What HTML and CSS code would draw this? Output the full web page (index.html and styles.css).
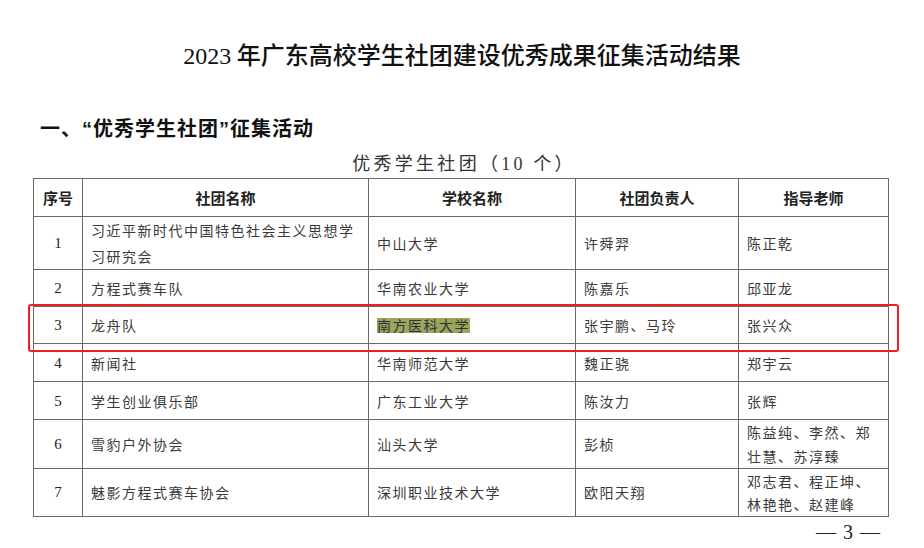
FILE: index.html
```html
<!DOCTYPE html>
<html lang="zh-CN">
<head>
<meta charset="utf-8">
<title>2023 年广东高校学生社团建设优秀成果征集活动结果</title>
<link rel="stylesheet" href="styles.css">
</head>
<body>
<div class="page">
  <h1 class="title"><span class="num">2023</span> 年广东高校学生社团建设优秀成果征集活动结果</h1>
  <h2 class="section">一、“优秀学生社团”征集活动</h2>
  <div class="caption">优秀学生社团（<span class="num">10</span> 个）</div>
  <table class="grid">
    <colgroup>
      <col class="c1"><col class="c2"><col class="c3"><col class="c4"><col class="c5">
    </colgroup>
    <thead>
      <tr class="h-head">
        <th>序号</th><th>社团名称</th><th>学校名称</th><th>社团负责人</th><th>指导老师</th>
      </tr>
    </thead>
    <tbody>
      <tr class="h-53 lh-26">
        <td class="idx">1</td><td>习近平新时代中国特色社会主义思想学习研究会</td><td>中山大学</td><td>许舜羿</td><td>陈正乾</td>
      </tr>
      <tr class="h-37">
        <td class="idx">2</td><td>方程式赛车队</td><td>华南农业大学</td><td>陈嘉乐</td><td>邱亚龙</td>
      </tr>
      <tr class="h-37">
        <td class="idx">3</td><td>龙舟队</td><td><span class="mark">南方医科大学</span></td><td>张宇鹏、马玲</td><td>张兴众</td>
      </tr>
      <tr class="h-38">
        <td class="idx">4</td><td>新闻社</td><td>华南师范大学</td><td>魏正骁</td><td>郑宇云</td>
      </tr>
      <tr class="h-38">
        <td class="idx">5</td><td>学生创业俱乐部</td><td>广东工业大学</td><td>陈汝力</td><td>张辉</td>
      </tr>
      <tr class="h-47">
        <td class="idx">6</td><td>雪豹户外协会</td><td>汕头大学</td><td>彭桢</td><td>陈益纯、李然、郑壮慧、苏淳臻</td>
      </tr>
      <tr class="h-48 lh-23">
        <td class="idx">7</td><td>魅影方程式赛车协会</td><td>深圳职业技术大学</td><td>欧阳天翔</td><td>邓志君、程正坤、林艳艳、赵建峰</td>
      </tr>
    </tbody>
  </table>
  <div class="pageno">— 3 —</div>
  <div class="redbox"></div>
</div>
</body>
</html>
```
FILE: styles.css
```css
html, body {
  margin: 0;
  padding: 0;
  background: #ffffff;
}

.page {
  position: relative;
  width: 924px;
  height: 548px;
  overflow: hidden;
  color: #222;
  font-family: "Noto Sans CJK SC", sans-serif;
}

.num {
  font-family: "Liberation Serif", serif;
}

.title {
  margin: 0;
  padding-top: 39px;
  font-size: 24px;
  line-height: 30px;
  font-weight: 500;
  text-align: center;
  color: #111;
}

.section {
  margin: 44px 0 0 0;
  padding-left: 40px;
  font-family: "Liberation Sans", "Noto Sans CJK SC", sans-serif;
  font-size: 20px;
  line-height: 28px;
  font-weight: 700;
  letter-spacing: 1px;
  color: #111;
}

.caption {
  margin-top: 7px;
  text-align: center;
  font-size: 18px;
  line-height: 24px;
  letter-spacing: 3.3px;
  color: #333;
  padding-left: 4px;
}

.grid {
  margin: 2px 0 0 33px;
  border-collapse: collapse;
  table-layout: fixed;
  width: 855px;
}

.c1 { width: 49px; }
.c2 { width: 286px; }
.c3 { width: 207px; }
.c4 { width: 163px; }
.c5 { width: 150px; }

.grid th,
.grid td {
  border: 1px solid #6a6a6a;
  padding: 0 8px;
  vertical-align: middle;
}

.grid th {
  font-size: 15px;
  font-weight: 700;
  text-align: center;
  color: #222;
  line-height: 20px;
}

.grid td {
  font-size: 14px;
  letter-spacing: 1.5px;
  line-height: 24px;
  color: #3a3a3a;
  text-align: left;
}

.grid td.idx {
  font-family: "Liberation Serif", serif;
  font-size: 15px;
  letter-spacing: 0;
  text-align: center;
  padding: 0;
  color: #222;
}

.h-head { height: 38px; }
.h-53 { height: 53px; }
.h-37 { height: 37px; }
.h-38 { height: 38px; }
.h-47 { height: 47px; }
.h-48 { height: 48px; }

.lh-26 td { line-height: 26px; }
.lh-23 td { line-height: 23px; }

.mark {
  display: inline-block;
  background: #9aa65e;
  line-height: 15px;
  height: 15px;
  color: #333;
}

.pageno {
  margin-top: 3px;
  text-align: right;
  padding-right: 44px;
  font-family: "Liberation Serif", serif;
  font-size: 20px;
  line-height: 24px;
  color: #222;
  word-spacing: 2px;
}

.redbox {
  position: absolute;
  left: 28px;
  top: 304px;
  width: 867px;
  height: 44px;
  border: 2.5px solid #f21d1d;
  border-radius: 3px;
}
```
